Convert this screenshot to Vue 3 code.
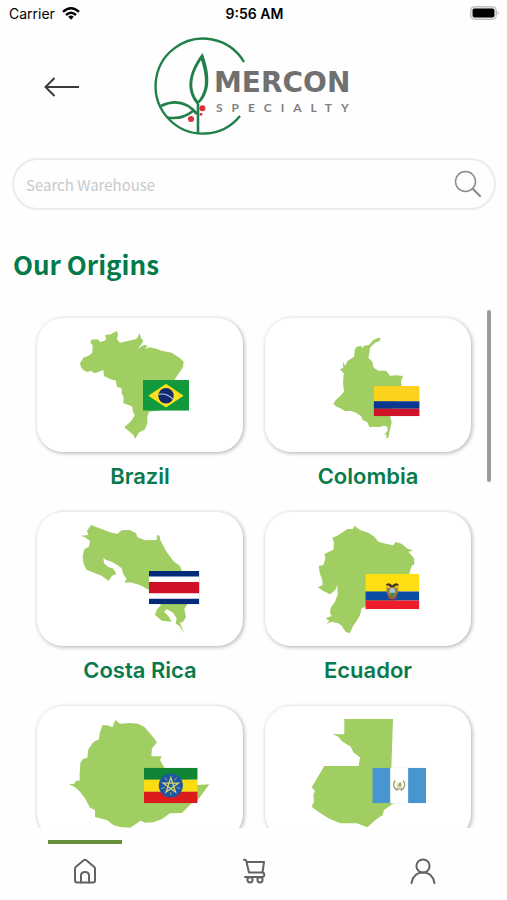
<script setup>
import { ref } from 'vue';

const search = ref('');

// Map outlines and flag positions share each card's viewBox
const origins = [
  {
    name: 'Brazil',
    viewBox: '21 24 618 402',
    flag: { x: 339, y: 210, w: 138, h: 92 },
    shape: 'M150 160 160 143 176 137 187 128 188 106 181 98 184 89 204 88 210 96 222 93 229 87 225 75 243 73 260 63 264 72 261 88 270 98 290 94 316 88 322 84 328 70 333 84 340 92 333 104 322 118 336 108 344 104 353 108 345 117 360 112 381 117 395 122 425 128 448 143 461 155 459 172 445 192 432 212 400 300 357 305 352 320 352 340 345 358 326 368 316 386 310 375 283 352 303 334 314 316 308 304 307 290 296 285 280 280 281 262 275 250 275 235 260 230 258 212 240 207 222 198 220 180 195 190 182 183 172 186 160 180 153 172Z'
  },
  {
    name: 'Colombia',
    viewBox: '15 39 618 402',
    flag: { x: 341, y: 243, w: 138, h: 91 },
    shape: 'M362 100 358 109 345 113 330 128 328 145 325 158 337 170 341 188 355 197 378 197 390 212 412 211 429 213 423 228 425 245 390 334 395 350 385 398 378 398 380 388 373 390 383 376 382 366 374 362 355 367 342 365 328 367 322 352 308 345 303 333 285 322 270 317 256 319 240 309 230 305 220 296 228 284 240 274 252 260 249 235 251 205 240 193 250 188 248 170 256 183 262 168 282 155 284 135 290 125 303 122 308 130 312 122 327 120 340 105 355 98Z'
  },
  {
    name: 'Costa Rica',
    viewBox: '21 21 618 402',
    flag: { x: 357, y: 198, w: 151, h: 100 },
    shape: 'M152 92 175 90 171 77 183 60 205 68 240 82 262 87 275 76 300 75 318 85 322 96 345 106 380 105 381 90 389 92 391 106 408 138 430 168 450 183 456 197 472 298 463 312 468 335 460 350 450 353 462 385 448 362 437 356 440 340 428 322 410 313 402 320 415 333 425 350 395 347 375 330 380 315 393 300 357 255 330 240 300 232 283 233 290 222 280 208 275 190 262 180 245 170 228 165 220 158 222 175 235 186 248 190 256 200 258 208 246 212 236 228 215 212 195 205 170 194 161 178 158 155 163 133 177 125 180 107 165 97Z'
  },
  {
    name: 'Ecuador',
    viewBox: '15 21 618 402',
    flag: { x: 316, y: 206, w: 162, h: 107 },
    shape: 'M284 62 300 75 325 83 343 95 355 110 380 117 400 121 407 111 425 116 440 130 460 137 445 140 462 160 463 178 455 182 448 207 400 300 316 305 305 310 300 330 290 348 278 365 270 384 258 382 245 362 235 355 215 350 200 357 208 347 197 340 215 333 210 325 212 308 225 290 233 268 232 240 226 255 210 268 190 258 173 247 188 240 187 225 180 207 176 183 190 180 196 160 193 148 203 142 220 134 222 115 217 98 232 92 250 80 262 72 278 72Z'
  },
  {
    name: 'Ethiopia',
    viewBox: '21 33 618 402',
    flag: { x: 342, y: 218, w: 161, h: 107 },
    shape: 'M117 268 133 266 138 257 149 257 149 235 151 205 158 192 172 188 175 163 191 140 207 133 209 115 217 91 232 91 247 97 256 75 270 86 300 84 325 86 343 96 360 115 381 142 366 160 364 184 395 184 390 195 403 218 503 270 538 268 505 313 485 325 456 354 420 355 395 373 370 382 345 383 332 377 310 392 300 398 270 396 250 390 232 376 195 366 195 345 180 338 165 310 148 288 133 275Z'
  },
  {
    name: 'Guatemala',
    viewBox: '15 33 618 402',
    flag: { x: 337, y: 218, w: 161, h: 107 },
    shape: 'M253 72 399 72 394 218 392 325 401 325 372 345 368 360 350 372 322 397 290 385 240 385 205 370 175 350 155 335 162 320 160 300 165 288 155 277 193 213 296 213 300 187 280 172 272 155 245 138 235 125 218 118 253 118Z'
  }
];
</script>

<template>
  <div class="app">
    <div class="status-bar">
      <div class="carrier">
        <span>Carrier</span>
        <svg width="18" height="13" viewBox="0 0 18 13">
          <g fill="none" stroke="#000" stroke-width="2.4">
            <path d="M1 4.8Q9 -2.2 17 4.8" />
            <path d="M4 8Q9 3.6 14 8" />
          </g>
          <path d="M6.2 9.8Q9 7.4 11.8 9.8L9 12.8Z" />
        </svg>
      </div>
      <span class="time">9:56 AM</span>
      <svg class="battery" width="30" height="14" viewBox="0 0 30 14">
        <rect x="0.7" y="0.7" width="25.6" height="12.6" rx="3.5" fill="#e4e4e4" stroke="#b5b5b5" />
        <rect x="2.6" y="2.4" width="21.8" height="9.2" rx="2" fill="#000" />
        <path d="M27.6 4.8Q29.8 7 27.6 9.2Z" fill="#aaa" />
      </svg>
    </div>

    <header class="header">
      <button class="back-button" aria-label="Back">
        <svg width="36" height="20" viewBox="0 0 36 20" fill="none" stroke="#3a3a3a" stroke-width="2">
          <path d="M35 10H2M10.5 1 1.5 10l9 9" />
        </svg>
      </button>

      <svg class="logo" width="200" height="98" viewBox="0 0 200 98">
        <g fill="none" stroke="#21804a" stroke-width="2.4">
          <path d="M90 24A47.5 47.5 0 1 0 86 78" />
          <path d="M44 66V96" stroke-width="2.6" />
          <path d="M7 68Q28 58 43 76" stroke-width="2.8" />
          <path d="M13 79.5Q28 82 39 73" stroke-width="2.6" />
        </g>
        <path
          fill="#21804a"
          fill-rule="evenodd"
          d="M48.5 15C32 37 32 54 43.5 67C57 56 57 37 48.5 15ZM47 22C51.5 37 54 51 44 63C35.5 52 36.5 38 47 22Z"
        />
        <g fill="#db3039">
          <circle cx="48.4" cy="70.3" r="3" />
          <circle cx="37" cy="81" r="3" />
          <circle cx="47" cy="76.3" r="1.4" />
        </g>
        <text class="logo-name" x="60" y="54">MERCON</text>
        <text class="logo-tag" x="62" y="74">SPECIALTY</text>
      </svg>
    </header>

    <div class="search">
      <input v-model="search" type="text" placeholder="Search Warehouse" aria-label="Search Warehouse" />
      <button class="search-button" aria-label="Search">
        <svg width="28" height="28" viewBox="0 0 28 28" fill="none" stroke="#8b8b8b">
          <circle cx="11.5" cy="11.5" r="10" stroke-width="1.5" />
          <path d="M19 19l7 7" stroke-width="2.2" stroke-linecap="round" />
        </svg>
      </button>
    </div>

    <h1 class="title">Our Origins</h1>

    <main class="origins">
      <div class="origin-list">
        <button v-for="origin in origins" :key="origin.name" class="origin">
          <span class="card">
            <svg :viewBox="origin.viewBox" class="map">
              <path :d="origin.shape" fill="#a0ce62" />
              <svg
                :x="origin.flag.x"
                :y="origin.flag.y"
                :width="origin.flag.w"
                :height="origin.flag.h"
                viewBox="0 0 60 40"
                preserveAspectRatio="none"
              >
                <template v-if="origin.name === 'Brazil'">
                  <path d="M0 0h60v40H0z" fill="#12993b" />
                  <path d="M7 20.5 30 5 53 20.5 30 36Z" fill="#fbe11c" />
                  <circle cx="30" cy="20.5" r="10" fill="#14286e" />
                  <path d="M20.6 18.5Q32 17 38.8 25" fill="none" stroke="#b5ccd8" stroke-width="1.6" />
                </template>
                <template v-else-if="origin.name === 'Colombia'">
                  <path d="M0 0h60v20H0z" fill="#fcd21f" />
                  <path d="M0 20h60v10H0z" fill="#09378f" />
                  <path d="M0 30h60v10H0z" fill="#ce1228" />
                </template>
                <template v-else-if="origin.name === 'Costa Rica'">
                  <path d="M0 0h60v40H0z" fill="#032b78" />
                  <path d="M0 6.7h60v26.6H0z" fill="#fff" />
                  <path d="M0 13.3h60v13.4H0z" fill="#ce1126" />
                </template>
                <template v-else-if="origin.name === 'Ecuador'">
                  <path d="M0 0h60v20H0z" fill="#ffdf12" />
                  <path d="M0 20h60v10H0z" fill="#084da3" />
                  <path d="M0 30h60v10H0z" fill="#ed1c2a" />
                  <path d="M24 22l-1-8 4 3v9zM36 22l1-8-4 3v9z" fill="#b38c4a" />
                  <ellipse cx="30" cy="21.5" rx="5.5" ry="7" fill="#926f38" />
                  <ellipse cx="30" cy="20.5" rx="3.4" ry="4.8" fill="#a4c9cf" />
                  <path d="M27 21.5h6l-1 4h-4z" fill="#55804e" />
                  <path d="M22.5 13q2-4 6-1l1.5 1 1.5-1q4-3 6 1-3 0-5.5 2h-4Q25.5 13 22.5 13Z" fill="#4b3920" />
                  <path d="M25 26q5 5 10 0" fill="none" stroke="#c23a32" stroke-width="1.2" />
                </template>
                <template v-else-if="origin.name === 'Ethiopia'">
                  <path d="M0 0h60v13.5H0z" fill="#118435" />
                  <path d="M0 13.5h60v13.5H0z" fill="#fedc14" />
                  <path d="M0 27h60v13H0z" fill="#dc1b1c" />
                  <circle cx="30" cy="20" r="13.5" fill="#1c57a5" />
                  <g fill="none" stroke="#d9d16d">
                    <path d="M30 11 35.3 27.3 21.4 17.2H38.6L24.7 27.3Z" stroke-width="1.4" />
                    <path d="M34.1 14.3l2.4-3.2M36.7 22.2l3.8 1.2M30 27v4M23.3 22.2l-3.8 1.2M25.9 14.3l-2.4-3.2" stroke-width="0.8" />
                  </g>
                </template>
                <template v-else>
                  <path d="M0 0h60v40H0z" fill="#4896d0" />
                  <path d="M20 0h20v40H20z" fill="#fff" />
                  <path d="M25.5 14.5Q21 21 28 25.5M34.5 14.5Q39 21 32 25.5" fill="none" stroke="#8a9b77" stroke-width="1.5" />
                  <path d="M27 17h6v6h-6z" fill="#e3dfb3" />
                  <path d="M29 20l2-4.5 1.5 3.5-1.5 3z" fill="#93ad5f" />
                  <path d="M27 23l6 2M33 23l-6 2" stroke="#a69770" stroke-width="0.8" />
                </template>
              </svg>
            </svg>
          </span>
          <span class="origin-name">{{ origin.name }}</span>
        </button>
      </div>
      <div class="scroll-thumb"></div>
    </main>

    <nav class="tab-bar">
      <a href="#home" class="tab active" aria-label="Home">
        <svg width="24" height="26" viewBox="0 0 24 26">
          <path d="M2 22.5V10.5Q2 9.5 3 8.7L10.7 2.3Q12 1.2 13.3 2.3L21 8.7Q22 9.5 22 10.5V22.5Q22 24.5 20 24.5H4Q2 24.5 2 22.5Z" />
          <path d="M8 24.5V17.5Q8 14 12 14T16 17.5V24.5" />
        </svg>
      </a>
      <a href="#cart" class="tab" aria-label="Cart">
        <svg width="24" height="26" viewBox="0 0 24 26">
          <path d="M2 1.7H3Q4 1.7 4.3 3L7 14.5H20.5L22 4H4.6" />
          <path d="M20.5 14.5Q22.5 15 22.3 17T20 19H3" />
          <circle cx="8" cy="21.8" r="2.6" />
          <circle cx="18" cy="21.8" r="2.6" />
        </svg>
      </a>
      <a href="#profile" class="tab" aria-label="Profile">
        <svg width="26" height="26" viewBox="0 0 26 26">
          <circle cx="13" cy="8" r="6.6" />
          <path d="M1.5 25Q3.5 14.6 13 14.6T24.5 25" />
        </svg>
      </a>
    </nav>
  </div>
</template>

<style>
body {
  margin: 0;
  background-color: #fefefe;
}
</style>

<style scoped>
.app {
  display: flex;
  flex-direction: column;
  height: 100vh;
  overflow: hidden;
  font-family: Inter, "Liberation Sans", sans-serif;
  color: #000;
}

button {
  padding: 0;
  border: none;
  background: none;
  font: inherit;
  cursor: pointer;
}

svg {
  display: block;
}

.status-bar {
  display: grid;
  grid-template-columns: 1fr auto 1fr;
  align-items: center;
  height: 26px;
  flex-shrink: 0;
  padding: 0 7px 0 9px;
  font-size: 14px;
}

.carrier {
  display: flex;
  align-items: center;
  gap: 7px;
}

.time {
  font-weight: 600;
}

.battery {
  justify-self: end;
}

/* 頁首 */
.header {
  display: grid;
  grid-template-columns: 1fr auto 1fr;
  align-items: center;
  flex-shrink: 0;
  padding-top: 12px;
}

.back-button {
  justify-self: start;
  margin-left: 44px;
}

.logo {
  overflow: visible;
}

.logo-name {
  font-family: "DejaVu Sans", sans-serif;
  font-size: 28px;
  font-weight: 700;
  fill: #707070;
}

.logo-tag {
  font-family: Lato, sans-serif;
  font-size: 12px;
  font-weight: 700;
  letter-spacing: 9px;
  fill: #808080;
}

/* 搜尋欄 */
.search {
  display: flex;
  align-items: center;
  flex-shrink: 0;
  box-sizing: border-box;
  height: 52px;
  margin: 22px 11px 0 12px;
  padding: 0 12px;
  border: 2px solid #ebebeb;
  border-radius: 26px;
}

.search input {
  flex: 1;
  min-width: 0;
  padding: 0;
  border: none;
  outline: none;
  background: none;
  font-family: "Noto Sans CJK SC", sans-serif;
  font-size: 15px;
  color: #444;
}

.search input::placeholder {
  color: #c9c9c9;
  opacity: 1;
}

.title {
  flex-shrink: 0;
  margin: 38px 13px 24px;
  font-family: "Noto Sans CJK SC", sans-serif;
  font-size: 26px;
  font-weight: 700;
  line-height: 32px;
  color: #047a4c;
}

/* 產地列表 */
.origins {
  position: relative;
  flex: 1;
  min-height: 0;
}

.origin-list {
  display: grid;
  grid-template-columns: 1fr 1fr;
  gap: 23px 22px;
  box-sizing: border-box;
  height: 100%;
  padding: 14px 36px 0 37px;
  overflow-y: auto;
  scrollbar-width: none;
}

.origin {
  display: flex;
  flex-direction: column;
  gap: 11px;
}

.card {
  display: block;
  width: 100%;
  height: 134px;
  border-radius: 26px;
  background-color: #fff;
  box-shadow: 1px 1px 4px rgba(0, 0, 0, 0.32);
}

.map {
  width: 100%;
  height: 100%;
}

.origin-name {
  width: 100%;
  font-size: 22px;
  font-weight: 600;
  line-height: 26px;
  text-align: center;
  color: #087a4c;
}

.scroll-thumb {
  position: absolute;
  top: 6px;
  right: 16px;
  width: 4px;
  height: 172px;
  border-radius: 2px;
  background-color: #9b9b9b;
}

/* 底部導覽 */
.tab-bar {
  display: grid;
  grid-template-columns: repeat(3, 1fr);
  flex-shrink: 0;
  height: 60px;
  padding-top: 12px;
}

.tab {
  display: flex;
  flex-direction: column;
  align-items: center;
  gap: 14px;
}

.tab::before {
  content: '';
  width: 74px;
  height: 4px;
}

.tab.active::before {
  background-color: #66903a;
}

.tab svg {
  fill: none;
  stroke: #626262;
  stroke-width: 2;
  stroke-linecap: round;
  stroke-linejoin: round;
}
</style>
